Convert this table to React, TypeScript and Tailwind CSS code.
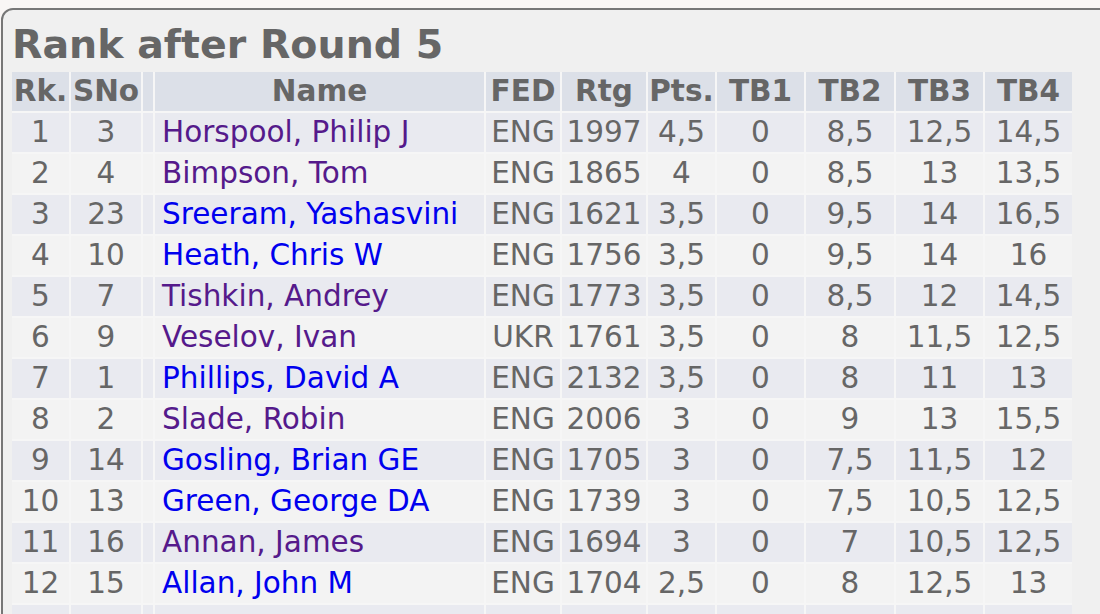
import React from 'react';

type Row = {
  rk: number;
  sno: number;
  name: string;
  visited: boolean;
  fed: string;
  rtg: number;
  pts: string;
  tb1: string;
  tb2: string;
  tb3: string;
  tb4: string;
};

const rows: Row[] = [
  { rk: 1, sno: 3, name: 'Horspool, Philip J', visited: true, fed: 'ENG', rtg: 1997, pts: '4,5', tb1: '0', tb2: '8,5', tb3: '12,5', tb4: '14,5' },
  { rk: 2, sno: 4, name: 'Bimpson, Tom', visited: true, fed: 'ENG', rtg: 1865, pts: '4', tb1: '0', tb2: '8,5', tb3: '13', tb4: '13,5' },
  { rk: 3, sno: 23, name: 'Sreeram, Yashasvini', visited: false, fed: 'ENG', rtg: 1621, pts: '3,5', tb1: '0', tb2: '9,5', tb3: '14', tb4: '16,5' },
  { rk: 4, sno: 10, name: 'Heath, Chris W', visited: false, fed: 'ENG', rtg: 1756, pts: '3,5', tb1: '0', tb2: '9,5', tb3: '14', tb4: '16' },
  { rk: 5, sno: 7, name: 'Tishkin, Andrey', visited: true, fed: 'ENG', rtg: 1773, pts: '3,5', tb1: '0', tb2: '8,5', tb3: '12', tb4: '14,5' },
  { rk: 6, sno: 9, name: 'Veselov, Ivan', visited: true, fed: 'UKR', rtg: 1761, pts: '3,5', tb1: '0', tb2: '8', tb3: '11,5', tb4: '12,5' },
  { rk: 7, sno: 1, name: 'Phillips, David A', visited: false, fed: 'ENG', rtg: 2132, pts: '3,5', tb1: '0', tb2: '8', tb3: '11', tb4: '13' },
  { rk: 8, sno: 2, name: 'Slade, Robin', visited: true, fed: 'ENG', rtg: 2006, pts: '3', tb1: '0', tb2: '9', tb3: '13', tb4: '15,5' },
  { rk: 9, sno: 14, name: 'Gosling, Brian GE', visited: false, fed: 'ENG', rtg: 1705, pts: '3', tb1: '0', tb2: '7,5', tb3: '11,5', tb4: '12' },
  { rk: 10, sno: 13, name: 'Green, George DA', visited: false, fed: 'ENG', rtg: 1739, pts: '3', tb1: '0', tb2: '7,5', tb3: '10,5', tb4: '12,5' },
  { rk: 11, sno: 16, name: 'Annan, James', visited: true, fed: 'ENG', rtg: 1694, pts: '3', tb1: '0', tb2: '7', tb3: '10,5', tb4: '12,5' },
  { rk: 12, sno: 15, name: 'Allan, John M', visited: false, fed: 'ENG', rtg: 1704, pts: '2,5', tb1: '0', tb2: '8', tb3: '12,5', tb4: '13' },
];

const headers = ['Rk.', 'SNo', '', 'Name', 'FED', 'Rtg', 'Pts.', 'TB1', 'TB2', 'TB3', 'TB4'];

export default function App() {
  return (
    <div className="h-[614px] w-[1100px] overflow-hidden bg-[#f9f6f5] pt-[8px] pl-[1px] font-['DejaVu_Sans',sans-serif] text-[#666]">
      <div className="w-[1130px] h-[640px] rounded-tl-[12px] border-2 border-[#777] bg-[#f0f0f0] pl-[9px] pt-[12px]">
        <h2 className="text-[39.5px] font-bold leading-[45px] mb-[5px]">Rank after Round 5</h2>

        {/* Ranking table */}
        <div className="grid grid-cols-[57px_70px_10px_329px_74px_84px_67px_87px_88px_87px_87px] gap-[2px] bg-[#f6f6f6] w-[1060px] text-[29.5px]">
          {headers.map((h, i) => (
            <div key={i} className="h-[39px] bg-[#dce0e8] font-bold text-center leading-[39px] whitespace-nowrap">
              {h}
            </div>
          ))}
          {rows.map((r) => {
            const bg = r.rk % 2 === 1 ? 'bg-[#e9eaf0]' : 'bg-[#f3f3f3]';
            const cell = `h-[39px] leading-[39px] text-center whitespace-nowrap ${bg}`;
            return (
              <React.Fragment key={r.rk}>
                <div className={cell}>{r.rk}</div>
                <div className={cell}>{r.sno}</div>
                <div className={cell}></div>
                <div className={`h-[39px] leading-[39px] whitespace-nowrap pl-[7px] ${bg}`}>
                  <a href="#" className={r.visited ? 'text-[#551a8b]' : 'text-[#0000ee]'}>
                    {r.name}
                  </a>
                </div>
                <div className={cell}>{r.fed}</div>
                <div className={cell}>{r.rtg}</div>
                <div className={cell}>{r.pts}</div>
                <div className={cell}>{r.tb1}</div>
                <div className={cell}>{r.tb2}</div>
                <div className={cell}>{r.tb3}</div>
                <div className={cell}>{r.tb4}</div>
              </React.Fragment>
            );
          })}
          {Array.from({ length: 11 }).map((_, i) => (
            <div key={'x' + i} className="h-[39px] bg-[#e9eaf0]"></div>
          ))}
        </div>
      </div>
    </div>
  );
}
